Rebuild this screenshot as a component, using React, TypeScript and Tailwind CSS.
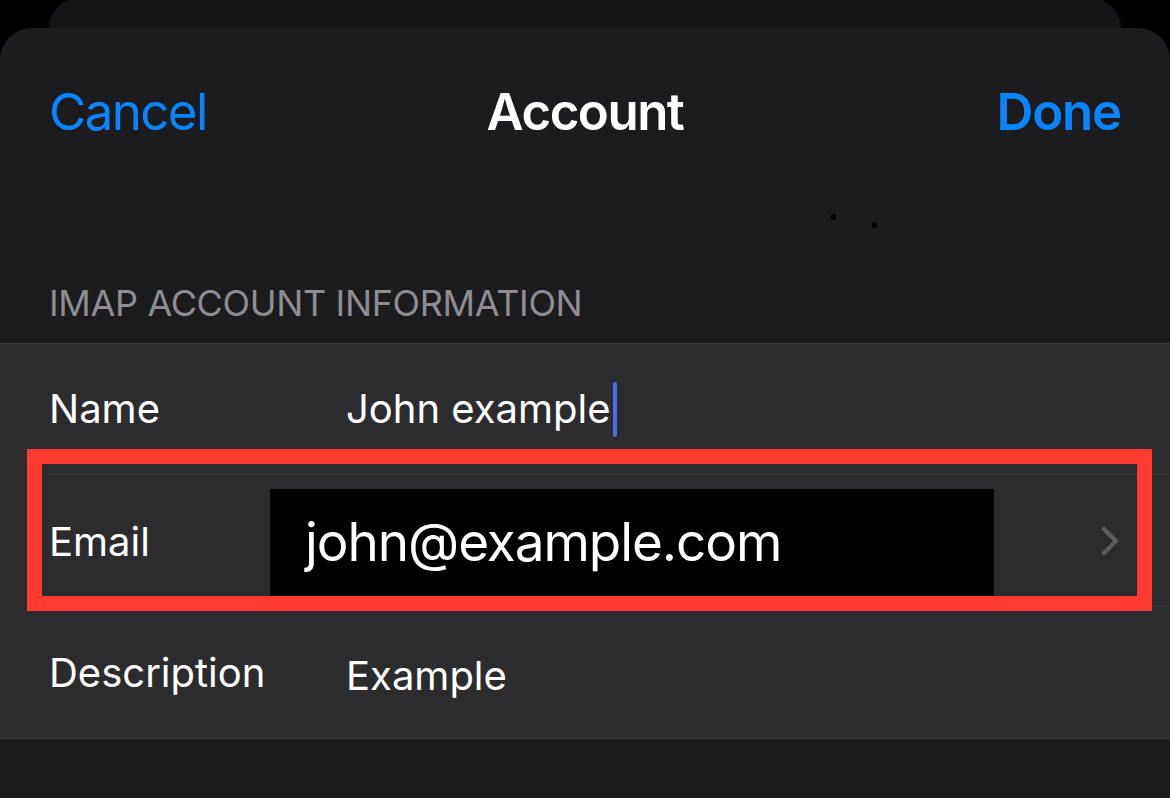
import React from "react";

const font = { fontFamily: "Inter, 'Noto Sans', sans-serif" };

function Chevron() {
  return (
    <svg width="18" height="30" viewBox="0 0 18 30" fill="none">
      <path
        d="M3 3 L15 15 L3 27"
        stroke="#5c5c60"
        strokeWidth="4.5"
        strokeLinecap="round"
        strokeLinejoin="round"
      />
    </svg>
  );
}

export default function App() {
  return (
    <div
      className="w-[1170px] h-[798px] bg-black overflow-hidden flex flex-col antialiased"
      style={font}
    >
      {/* card stacked behind */}
      <div className="mx-[49px] h-[30px] -mt-[2px] shrink-0 rounded-t-[30px] bg-[#141416]" />

      {/* sheet */}
      <div className="relative flex-1 rounded-t-[32px] bg-[#1c1c1e] flex flex-col">
        <div className="grid grid-cols-3 items-center px-[49px] pt-[58px] text-[51px] leading-none">
          <span className="justify-self-start text-[#0a84ff] tracking-[-1.6px]">Cancel</span>
          <span className="justify-self-center text-white font-semibold tracking-[-1.5px]">Account</span>
          <span className="justify-self-end text-[#0a84ff] font-semibold tracking-[-1.2px]">Done</span>
        </div>

        {/* stray marks */}
        <div className="relative h-[148px]">
          <span className="absolute left-[831px] top-[77px] w-[5px] h-[6px] rounded-full bg-black" />
          <span className="absolute left-[872px] top-[85px] w-[5px] h-[6px] rounded-full bg-black" />
        </div>

        <div className="px-[49px] text-[36px] leading-none text-[#8d8d93] tracking-[-0.35px]">
          IMAP ACCOUNT INFORMATION
        </div>

        <div className="mt-[22px] border-y border-[#3a3a3d] bg-[#2c2c2e]">
          {/* Name */}
          <div className="flex items-center h-[130px] pl-[49px] text-[40px] leading-none text-white">
            <span className="w-[297px]">Name</span>
            <span className="flex items-center">
              John example
              <span className="ml-[2px] w-[4px] h-[55px] rounded-full bg-[#4f6bed]" />
            </span>
          </div>

          {/* Email */}
          <div className="ml-[49px] border-t border-[#3a3a3d]">
            <div className="relative flex items-end h-[131px] pr-[51px] text-white">
              <span className="w-[221px] self-center text-[40px] leading-none mt-[2px]">Email</span>
              <div className="w-[724px] h-[107px] mb-[10px] bg-black flex items-center pl-[35px] text-[53px] leading-none tracking-[-1.05px]">
                john@example.com
              </div>
              <div className="ml-auto self-center">
                <Chevron />
              </div>
            </div>
          </div>

          {/* Description */}
          <div className="ml-[49px] border-t border-[#3a3a3d]">
            <div className="flex items-center h-[131px] text-[40px] leading-none text-white">
              <span className="w-[297px]">Description</span>
              <span className="mt-[6px]">Example</span>
            </div>
          </div>
        </div>

        {/* highlight annotation */}
        <div className="absolute left-[27px] top-[421px] w-[1125px] h-[162px] border-[15px] border-[#ff3b30]" />
      </div>
    </div>
  );
}
